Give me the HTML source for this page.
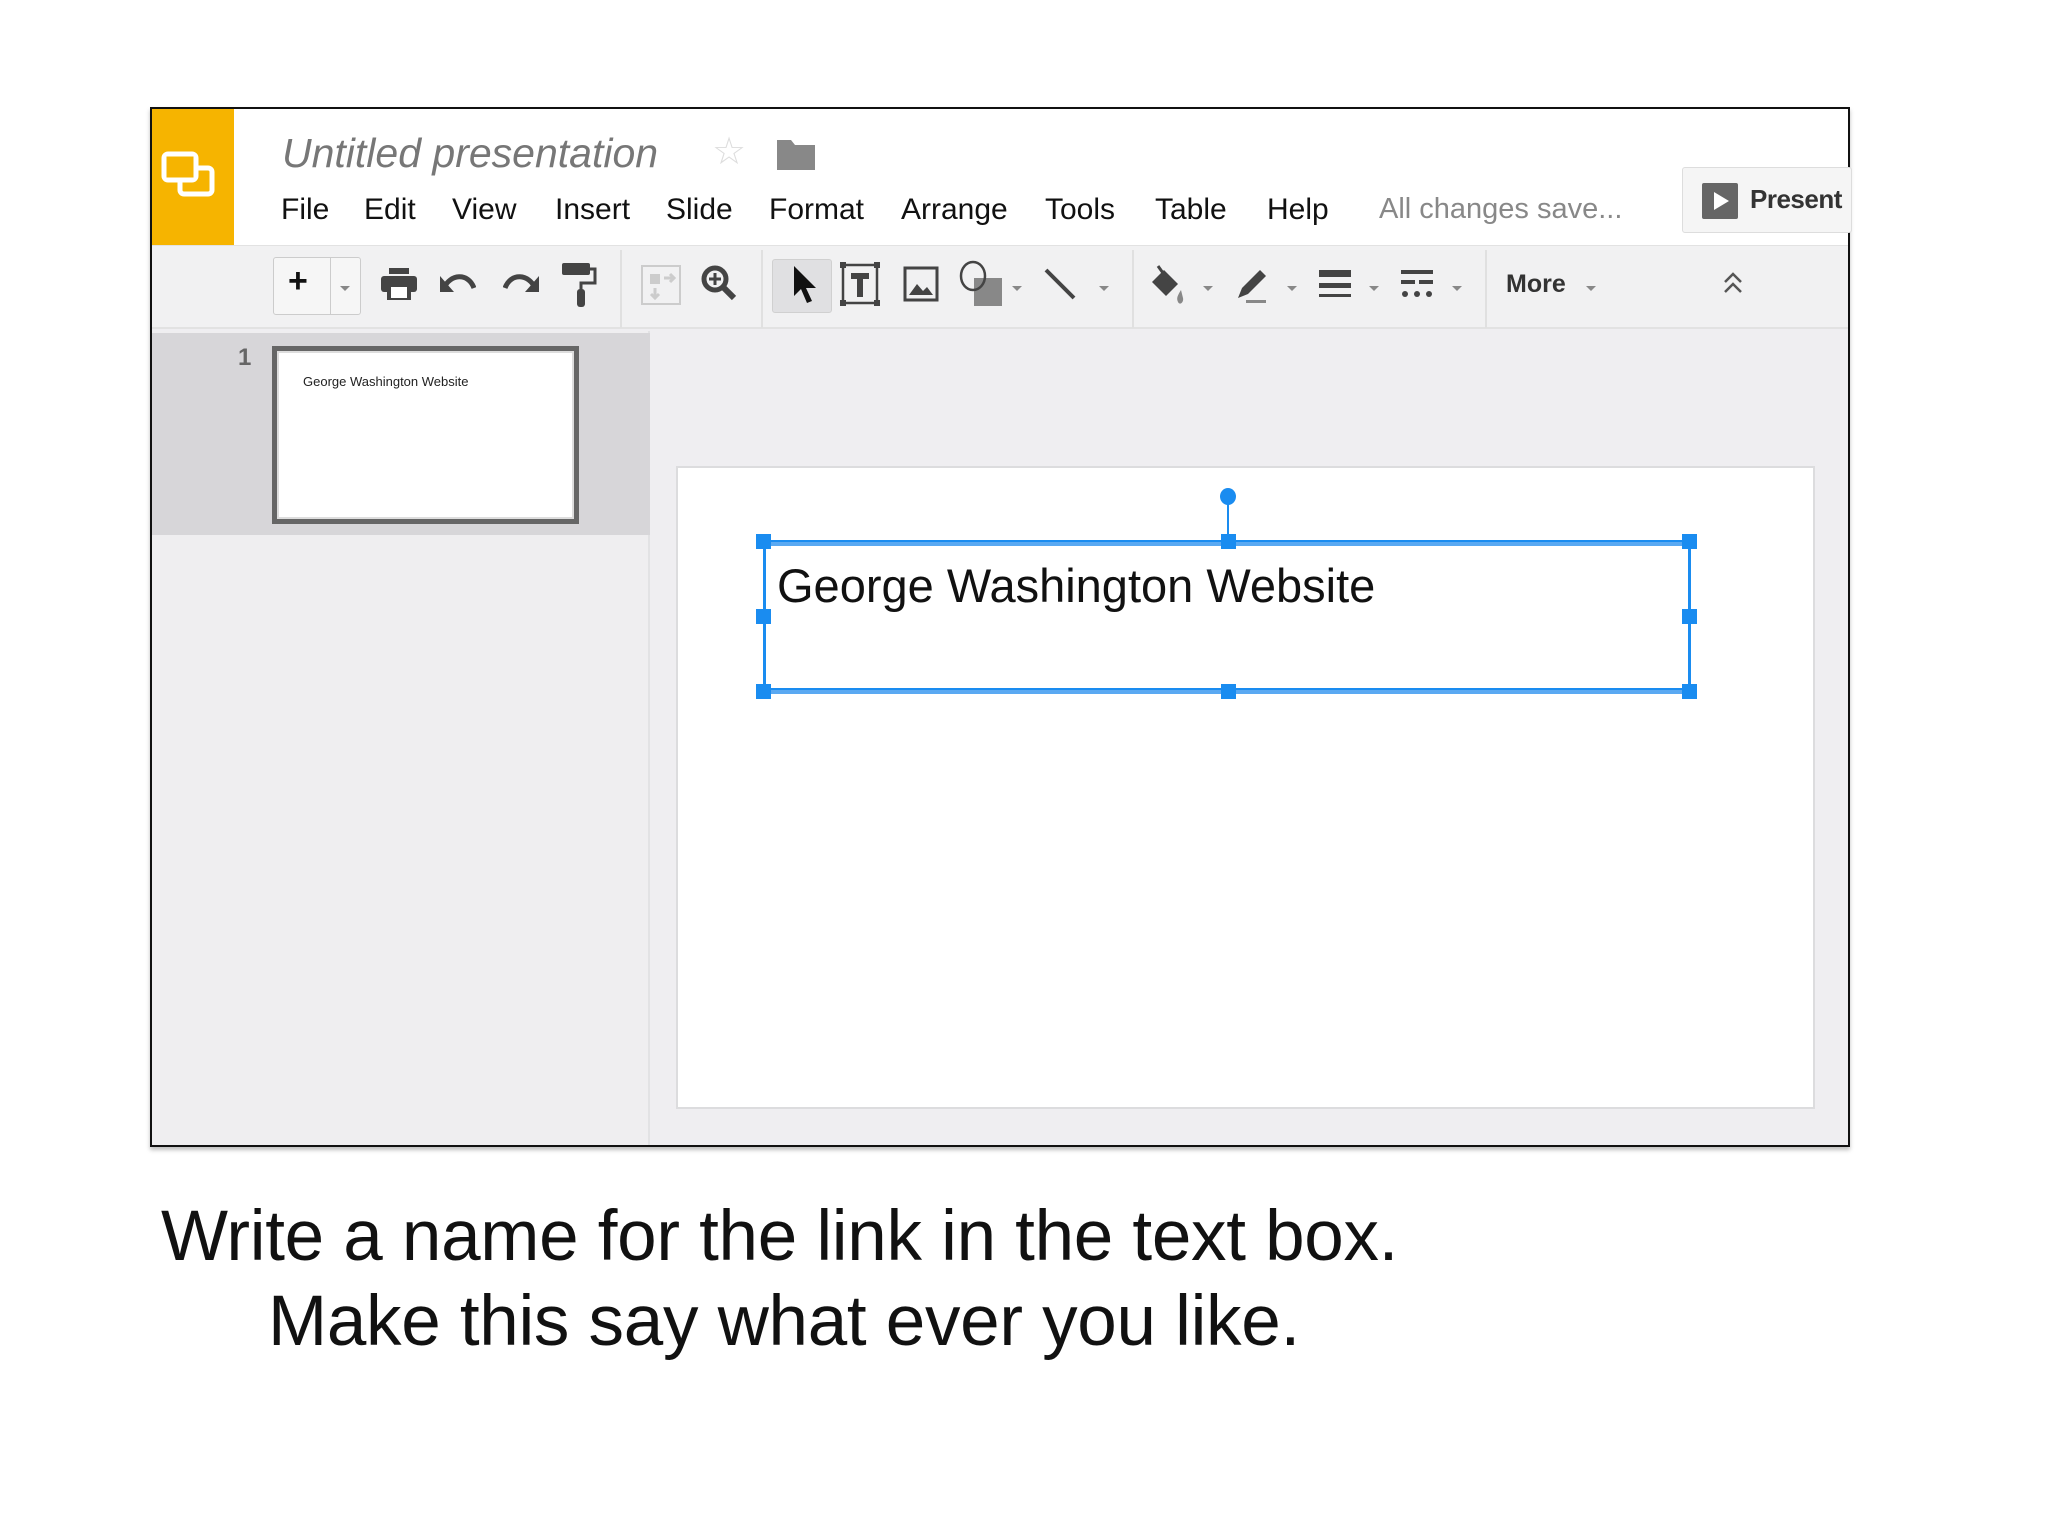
<!DOCTYPE html>
<html><head><meta charset="utf-8"><style>
*{margin:0;padding:0;box-sizing:border-box}
body{width:2048px;height:1536px;background:#fff;position:relative;overflow:hidden;font-family:"Liberation Sans",Arial,sans-serif}
.a{position:absolute}
.menu{position:absolute;top:193px;font-size:30px;color:#111}
.sep{position:absolute;top:250px;width:2px;height:78px;background:#e0e0e0}
.arr{position:absolute;top:286px;width:0;height:0;border-left:5px solid transparent;border-right:5px solid transparent;border-top:5px solid #888}
.h{position:absolute;width:15px;height:15px;background:#1a8cf0}
</style></head><body>
<div class="a" style="left:150px;top:107px;width:1700px;height:1040px;border:2px solid #111;background:#efeef1;box-shadow:0 3px 4px rgba(0,0,0,.25)"></div>
<div class="a" style="left:152px;top:109px;width:1696px;height:136px;background:#fff"></div>
<div class="a" style="left:152px;top:109px;width:82px;height:136px;background:#f6b400"></div>
<svg class="a" style="left:160px;top:148px" width="60" height="60" viewBox="0 0 60 60"><rect x="4" y="6" width="32" height="26" rx="4" fill="none" stroke="#fff" stroke-width="5"/><rect x="20" y="20" width="32" height="26" rx="4" fill="none" stroke="#fff" stroke-width="5"/><rect x="6.5" y="8.5" width="27" height="21" fill="#f6b400"/></svg>
<div class="a" style="left:282px;top:130px;font-size:41px;font-style:italic;color:#777">Untitled presentation</div>
<div class="a" style="left:712px;top:129px;font-size:38px;color:#ddd">☆</div>
<svg class="a" style="left:777px;top:138px" width="40" height="32"><path d="M0 2h14l4 5h20v25H0z" fill="#888"/></svg>
<div class="menu" style="left:281px">File</div>
<div class="menu" style="left:364px">Edit</div>
<div class="menu" style="left:452px">View</div>
<div class="menu" style="left:555px">Insert</div>
<div class="menu" style="left:666px">Slide</div>
<div class="menu" style="left:769px">Format</div>
<div class="menu" style="left:901px">Arrange</div>
<div class="menu" style="left:1045px">Tools</div>
<div class="menu" style="left:1155px">Table</div>
<div class="menu" style="left:1267px">Help</div>
<div class="menu" style="left:1379px;color:#888;font-size:29px">All changes save...</div>
<div class="a" style="left:1682px;top:167px;width:170px;height:66px;border:1px solid #ddd;border-radius:3px;background:#f5f5f5"></div>
<svg class="a" style="left:1702px;top:183px" width="36" height="36"><rect width="36" height="36" rx="2" fill="#666"/><path d="M12 9l15 9-15 9z" fill="#fff"/></svg>
<div class="a" style="left:1750px;top:184px;font-size:26px;font-weight:bold;color:#333;letter-spacing:-0.5px">Present</div>
<div class="a" style="left:152px;top:245px;width:1696px;height:84px;background:#f1f1f2;border-top:1px solid #e2e2e2;border-bottom:2px solid #e2e2e2"></div>
<div class="a" style="left:273px;top:257px;width:88px;height:58px;border:1px solid #ccc;border-radius:3px;background:#f6f6f6"></div>
<div class="a" style="left:330px;top:258px;width:1px;height:56px;background:#ccc"></div>
<div class="a" style="left:288px;top:262px;font-size:34px;font-weight:bold;color:#111">+</div>
<div class="arr" style="left:340px"></div>
<svg class="a" style="left:381px;top:268px" width="36" height="32" viewBox="0 0 36 32"><rect x="8" y="0" width="20" height="6" fill="#444"/><rect x="0" y="8" width="36" height="16" rx="3" fill="#444"/><rect x="8" y="17" width="20" height="15" fill="#fff" stroke="#444" stroke-width="4"/></svg>
<svg class="a" style="left:440px;top:270px" width="36" height="26"><path d="M4 18 C10 4 28 2 34 18" fill="none" stroke="#444" stroke-width="5"/><path d="M0 6v16h14z" fill="#444"/></svg>
<svg class="a" style="left:503px;top:270px" width="36" height="26"><path d="M32 18 C26 4 8 2 2 18" fill="none" stroke="#444" stroke-width="5"/><path d="M36 6v16H22z" fill="#444"/></svg>
<svg class="a" style="left:562px;top:263px" width="36" height="46"><rect x="0" y="0" width="28" height="12" rx="2" fill="#444"/><path d="M28 6h5v14H19v8" fill="none" stroke="#444" stroke-width="3"/><rect x="15" y="26" width="8" height="18" rx="3" fill="#444"/></svg>
<div class="sep" style="left:620px"></div>
<svg class="a" style="left:638px;top:262px" width="46" height="46"><rect x="4" y="4" width="38" height="38" fill="none" stroke="#ccc" stroke-width="2"/><rect x="12" y="12" width="10" height="10" fill="#ccc"/><path d="M26 16h10M32 12l4 4-4 4M17 26v10M13 32l4 4 4-4" stroke="#ccc" stroke-width="3" fill="none"/></svg>
<svg class="a" style="left:700px;top:264px" width="38" height="40"><circle cx="15" cy="15" r="11" fill="none" stroke="#444" stroke-width="5"/><path d="M23 23l11 11" stroke="#444" stroke-width="6"/><path d="M15 9v12M9 15h12" stroke="#444" stroke-width="3"/></svg>
<div class="sep" style="left:761px"></div>
<div class="a" style="left:772px;top:259px;width:60px;height:54px;background:#e0e0e2;border:1px solid #d0d0d0;border-radius:3px"></div>
<svg class="a" style="left:792px;top:266px" width="24" height="38"><path d="M2 0v30l7-7 6 14 5-2-6-13h10z" fill="#111"/></svg>
<svg class="a" style="left:840px;top:262px" width="40" height="44"><rect x="3" y="3" width="34" height="38" fill="none" stroke="#444" stroke-width="2.5"/><g fill="#444"><rect x="0" y="0" width="6" height="6"/><rect x="34" y="0" width="6" height="6"/><rect x="0" y="38" width="6" height="6"/><rect x="34" y="38" width="6" height="6"/></g><path d="M11 11h18v6h-6v18h-6V17h-6z" fill="#444"/></svg>
<svg class="a" style="left:903px;top:266px" width="36" height="36"><rect x="2" y="2" width="32" height="32" fill="none" stroke="#444" stroke-width="3"/><path d="M6 29l8-11 6 7 4-4 6 8z" fill="#444"/></svg>
<svg class="a" style="left:958px;top:260px" width="46" height="50"><rect x="16" y="18" width="28" height="28" fill="#888"/><ellipse cx="15" cy="16" rx="12" ry="14" fill="none" stroke="#444" stroke-width="2.5"/></svg>
<div class="arr" style="left:1012px"></div>
<svg class="a" style="left:1042px;top:266px" width="36" height="36"><path d="M4 4l28 28" stroke="#444" stroke-width="4"/></svg>
<div class="arr" style="left:1099px"></div>
<div class="sep" style="left:1132px"></div>
<svg class="a" style="left:1148px;top:264px" width="40" height="42"><path d="M4 18l12-12 14 14-12 12z" fill="#444"/><path d="M10 2l10 14" stroke="#444" stroke-width="3"/><path d="M33 26c-3 5-5 8-3 12s6 0 5-4z" fill="#888"/></svg>
<div class="arr" style="left:1203px"></div>
<svg class="a" style="left:1234px;top:264px" width="40" height="42"><path d="M4 34l4-10 18-18 6 6-18 18z" fill="#444"/><rect x="12" y="36" width="20" height="3" fill="#888"/></svg>
<div class="arr" style="left:1287px"></div>
<svg class="a" style="left:1319px;top:268px" width="32" height="32"><rect x="0" y="2" width="32" height="7" fill="#444"/><rect x="0" y="15" width="32" height="5" fill="#444"/><rect x="0" y="26" width="32" height="3" fill="#444"/></svg>
<div class="arr" style="left:1369px"></div>
<svg class="a" style="left:1401px;top:268px" width="32" height="32"><rect x="0" y="2" width="32" height="4" fill="#444"/><rect x="0" y="12" width="14" height="4" fill="#444"/><rect x="18" y="12" width="14" height="4" fill="#444"/><circle cx="4" cy="26" r="3" fill="#444"/><circle cx="16" cy="26" r="3" fill="#444"/><circle cx="28" cy="26" r="3" fill="#444"/></svg>
<div class="arr" style="left:1452px"></div>
<div class="sep" style="left:1485px"></div>
<div class="a" style="left:1506px;top:270px;font-size:25px;font-weight:bold;color:#333">More</div>
<div class="arr" style="left:1586px"></div>
<svg class="a" style="left:1722px;top:270px" width="22" height="26"><path d="M3 12l8-8 8 8M3 22l8-8 8 8" fill="none" stroke="#555" stroke-width="2.5"/></svg>
<div class="a" style="left:152px;top:331px;width:498px;height:814px;background:#efeef0;border-right:2px solid #e2e2e4"></div>
<div class="a" style="left:152px;top:333px;width:498px;height:202px;background:#d7d6d9"></div>
<div class="a" style="left:238px;top:344px;font-size:24px;font-weight:bold;color:#666">1</div>
<div class="a" style="left:272px;top:346px;width:307px;height:178px;background:#fff;border:5px solid #666;box-shadow:inset 0 0 0 2px #ddd"></div>
<div class="a" style="left:303px;top:374px;font-size:13px;color:#222">George Washington Website</div>
<div class="a" style="left:676px;top:466px;width:1139px;height:643px;background:#fff;border:2px solid #dcdcde"></div>
<div class="a" style="left:770px;top:540px;width:914px;height:6px;background:#5aa9f2;border-top:2px solid #1a8cf0"></div>
<div class="a" style="left:770px;top:688px;width:914px;height:6px;background:#5aa9f2;border-top:2px solid #1a8cf0"></div>
<div class="a" style="left:763px;top:549px;width:3px;height:138px;background:#1a8cf0"></div>
<div class="a" style="left:1688px;top:549px;width:3px;height:138px;background:#1a8cf0"></div>
<div class="a" style="left:1227px;top:502px;width:2px;height:38px;background:#1a8cf0"></div>
<div class="a" style="left:1220px;top:488px;width:16px;height:17px;border-radius:50%;background:#1a8cf0"></div>
<div class="h" style="left:756px;top:534px"></div><div class="h" style="left:1221px;top:534px"></div><div class="h" style="left:1682px;top:534px"></div>
<div class="h" style="left:756px;top:609px"></div><div class="h" style="left:1682px;top:609px"></div>
<div class="h" style="left:756px;top:684px"></div><div class="h" style="left:1221px;top:684px"></div><div class="h" style="left:1682px;top:684px"></div>
<div class="a" style="left:777px;top:558px;font-size:47px;color:#111">George Washington Website</div>
<div class="a" style="left:161px;top:1196px;font-size:71px;color:#111;white-space:nowrap;letter-spacing:-0.3px">Write a name for the link in the text box.</div>
<div class="a" style="left:268px;top:1281px;font-size:71px;color:#111;white-space:nowrap;letter-spacing:-0.3px">Make this say what ever you like.</div>
</body></html>
